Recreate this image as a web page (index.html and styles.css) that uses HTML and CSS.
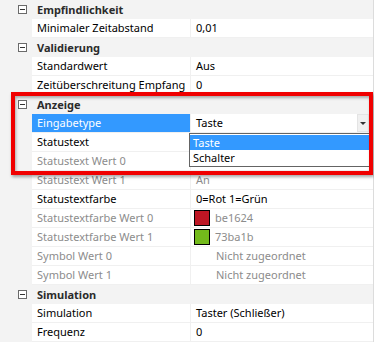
FILE: index.html
```html
<!DOCTYPE html>
<html>
<head>
<meta charset="utf-8" />
<title>Eigenschaften</title>
<link rel="stylesheet" href="styles.css">
</head>
<body>
<div class="grid">
  <div class="cat"><span class="toggle"></span><span class="cat_name">Empfindlichkeit</span></div>
  <div class="prop"><span class="gutter"></span><span class="name">Minimaler Zeitabstand</span><span class="value">0,01</span></div>

  <div class="cat"><span class="toggle"></span><span class="cat_name">Validierung</span></div>
  <div class="prop"><span class="gutter"></span><span class="name">Standardwert</span><span class="value">Aus</span></div>
  <div class="prop"><span class="gutter"></span><span class="name">Zeitüberschreitung Empfang</span><span class="value">0</span></div>

  <div class="cat"><span class="toggle"></span><span class="cat_name">Anzeige</span></div>
  <div class="prop"><span class="gutter"></span><span class="name selected">Eingabetype</span><span class="value editing">Taste<span class="drop_btn"></span>
    <span class="drop_list"><span class="item active">Taste</span><span class="item">Schalter</span></span></span></div>
  <div class="prop"><span class="gutter"></span><span class="name">Statustext</span><span class="value"></span></div>
  <div class="prop dis"><span class="gutter"></span><span class="name">Statustext Wert 0</span><span class="value"></span></div>
  <div class="prop dis"><span class="gutter"></span><span class="name">Statustext Wert 1</span><span class="value">An</span></div>
  <div class="prop"><span class="gutter"></span><span class="name">Statustextfarbe</span><span class="value">0=Rot 1=Grün</span></div>
  <div class="prop dis"><span class="gutter"></span><span class="name">Statustextfarbe Wert 0</span><span class="value"><span class="swatch red"></span>be1624</span></div>
  <div class="prop dis"><span class="gutter"></span><span class="name">Statustextfarbe Wert 1</span><span class="value"><span class="swatch green"></span>73ba1b</span></div>
  <div class="prop dis"><span class="gutter"></span><span class="name">Symbol Wert 0</span><span class="value indent">Nicht zugeordnet</span></div>
  <div class="prop dis"><span class="gutter"></span><span class="name">Symbol Wert 1</span><span class="value indent">Nicht zugeordnet</span></div>

  <div class="cat"><span class="toggle"></span><span class="cat_name">Simulation</span></div>
  <div class="prop"><span class="gutter"></span><span class="name">Simulation</span><span class="value">Taster (Schließer)</span></div>
  <div class="prop"><span class="gutter"></span><span class="name">Frequenz</span><span class="value">0</span></div>

  <!-- Markierung -->
  <div class="mark"></div>
</div>
</body>
</html>
```

FILE: styles.css
```css
* {
	margin: 0;
	padding: 0;
	box-sizing: border-box;
}
body {
	width: 374px;
	height: 342px;
	overflow: hidden;
	background: #f3f3f3;
	font-family: "Noto Sans", "Liberation Sans", sans-serif;
	font-size: 11px;
	color: #000;
}
.grid {
	position: relative;
	width: 374px;
	border-right: 1px solid #dcdcdc;
}
.cat {
	display: flex;
	align-items: center;
	height: 19px;
	background: #f3f3f3;
}
.toggle {
	position: relative;
	width: 9px;
	height: 9px;
	margin: 0 10px 0 18px;
	border: 1px solid #6a6a6a;
	background: #fff;
}
.toggle::after {
	content: "";
	position: absolute;
	left: 1px;
	top: 3px;
	width: 5px;
	height: 1px;
	background: #333;
}
.cat_name {
	font-weight: bold;
	color: #2b2b2b;
	line-height: 18px;
}
.prop {
	display: flex;
	height: 19px;
	line-height: 18px;
	border-bottom: 1px solid #f0f0f0;
}
.gutter {
	width: 32px;
	height: 19px;
	margin-bottom: -1px;
	background: #f3f3f3;
}
.name {
	width: 159px;
	padding-left: 5px;
	background: #fff;
	border-right: 1px solid #f0f0f0;
	white-space: nowrap;
	overflow: hidden;
}
.name.selected {
	background: #3399ff;
	color: #fff;
}
.value {
	position: relative;
	flex: 1;
	display: flex;
	align-items: center;
	padding-left: 5px;
	background: #fff;
	white-space: nowrap;
}
.value.indent {
	padding-left: 25px;
}
.dis .name, .dis .value {
	color: #8c8c8c;
}
.swatch {
	width: 16px;
	height: 16px;
	margin: 0 5px 0 -2px;
	border: 1px solid #000;
}
.swatch.red { background: #be1624; }
.swatch.green { background: #73ba1b; }

.drop_btn {
	position: absolute;
	right: 4px;
	top: 0;
	width: 12px;
	height: 18px;
	background: #f0f0f0;
	border: 1px solid #e4e4e4;
}
.drop_btn::after {
	content: "";
	position: absolute;
	left: 2px;
	top: 7px;
	border-left: 3px solid transparent;
	border-right: 3px solid transparent;
	border-top: 3px solid #333;
}
.drop_list {
	position: absolute;
	left: -2px;
	top: 19px;
	width: 181px;
	padding: 1px 0;
	background: #fff;
	border: 1px solid #646464;
	z-index: 2;
}
.item {
	display: block;
	height: 15px;
	line-height: 15px;
	padding-left: 3px;
}
.item.active {
	background: #3399ff;
	color: #fff;
}

.mark {
	position: absolute;
	left: 11px;
	top: 92px;
	width: 362px;
	height: 83px;
	border: 4px solid #f00000;
	box-shadow: 1px 2px 3px rgba(0, 0, 0, 0.35), inset 1px 2px 3px rgba(0, 0, 0, 0.3);
	z-index: 3;
}
```
